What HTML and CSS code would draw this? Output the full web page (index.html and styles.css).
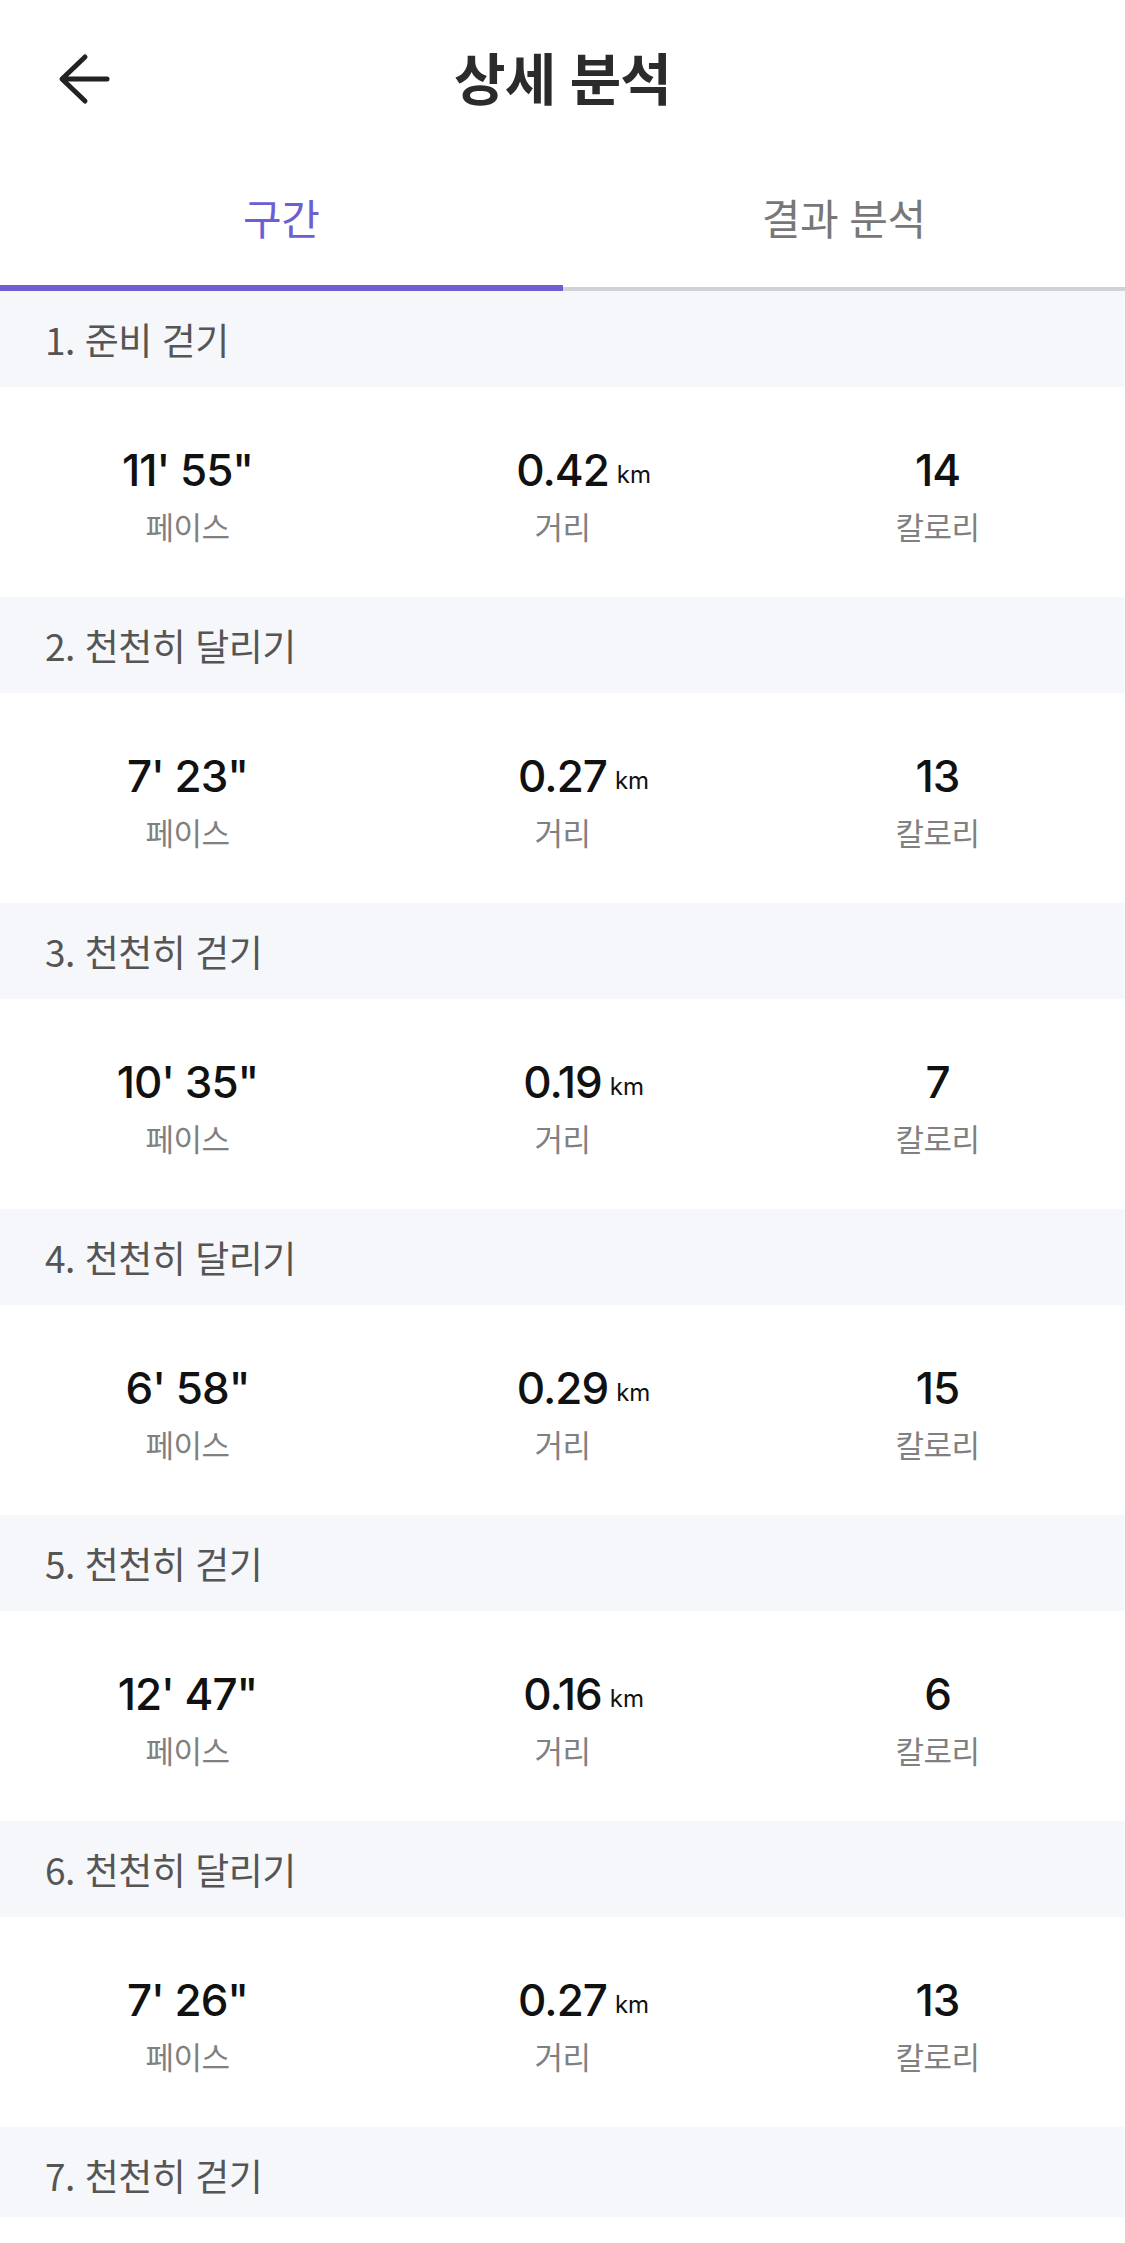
FILE: index.html
```html
<!DOCTYPE html>
<html lang="ko">
<head>
<meta charset="utf-8">
<title>상세 분석</title>
<link rel="stylesheet" href="styles.css">
</head>
<body>
<div class="screen">
  <header class="topbar">
    <button class="back" aria-label="뒤로">
      <svg width="56" height="56" viewBox="0 0 56 56" fill="none" stroke="#222" stroke-width="5" stroke-linecap="round" stroke-linejoin="round">
        <path d="M51 28H7"/>
        <path d="M29 6L6 28L29 50"/>
      </svg>
    </button>
    <h1 class="title">상세 분석</h1>
  </header>
  <nav class="tabs">
    <div class="tab active">구간</div>
    <div class="tab">결과 분석</div>
  </nav>

  <section class="seg">
    <div class="seg-head">1. 준비 걷기</div>
    <div class="stats">
      <div class="stat"><div class="val">11' 55"</div><div class="lbl">페이스</div></div>
      <div class="stat"><div class="val">0.42<span class="unit">km</span></div><div class="lbl">거리</div></div>
      <div class="stat"><div class="val">14</div><div class="lbl">칼로리</div></div>
    </div>
  </section>

  <section class="seg">
    <div class="seg-head">2. 천천히 달리기</div>
    <div class="stats">
      <div class="stat"><div class="val">7' 23"</div><div class="lbl">페이스</div></div>
      <div class="stat"><div class="val">0.27<span class="unit">km</span></div><div class="lbl">거리</div></div>
      <div class="stat"><div class="val">13</div><div class="lbl">칼로리</div></div>
    </div>
  </section>

  <section class="seg">
    <div class="seg-head">3. 천천히 걷기</div>
    <div class="stats">
      <div class="stat"><div class="val">10' 35"</div><div class="lbl">페이스</div></div>
      <div class="stat"><div class="val">0.19<span class="unit">km</span></div><div class="lbl">거리</div></div>
      <div class="stat"><div class="val">7</div><div class="lbl">칼로리</div></div>
    </div>
  </section>

  <section class="seg">
    <div class="seg-head">4. 천천히 달리기</div>
    <div class="stats">
      <div class="stat"><div class="val">6' 58"</div><div class="lbl">페이스</div></div>
      <div class="stat"><div class="val">0.29<span class="unit">km</span></div><div class="lbl">거리</div></div>
      <div class="stat"><div class="val">15</div><div class="lbl">칼로리</div></div>
    </div>
  </section>

  <section class="seg">
    <div class="seg-head">5. 천천히 걷기</div>
    <div class="stats">
      <div class="stat"><div class="val">12' 47"</div><div class="lbl">페이스</div></div>
      <div class="stat"><div class="val">0.16<span class="unit">km</span></div><div class="lbl">거리</div></div>
      <div class="stat"><div class="val">6</div><div class="lbl">칼로리</div></div>
    </div>
  </section>

  <section class="seg">
    <div class="seg-head">6. 천천히 달리기</div>
    <div class="stats">
      <div class="stat"><div class="val">7' 26"</div><div class="lbl">페이스</div></div>
      <div class="stat"><div class="val">0.27<span class="unit">km</span></div><div class="lbl">거리</div></div>
      <div class="stat"><div class="val">13</div><div class="lbl">칼로리</div></div>
    </div>
  </section>

  <section class="seg">
    <div class="seg-head">7. 천천히 걷기</div>
  </section>
</div>
</body>
</html>
```

FILE: styles.css
```css
* { box-sizing: border-box; }
html, body { margin: 0; padding: 0; background: #fff; }
body {
  font-family: "Noto Sans CJK KR", "Noto Sans", sans-serif;
  color: #222;
}
.screen {
  width: 1125px;
  height: 2217px;
  overflow: hidden;
  display: flex;
  flex-direction: column;
}
.topbar {
  height: 152px;
  display: flex;
  align-items: center;
  justify-content: center;
  position: relative;
  flex: none;
}
.back {
  position: absolute;
  left: 56px;
  top: 51px;
  width: 56px;
  height: 56px;
  padding: 0;
  border: 0;
  background: none;
  display: flex;
}
.title {
  margin: 0;
  font-size: 56px;
  font-weight: 700;
  color: #2b2b2b;
  line-height: 64px;
  letter-spacing: -1px;
}
.tabs {
  display: flex;
  height: 139px;
  flex: none;
}
.tab {
  flex: 1;
  text-align: center;
  padding-top: 38px;
  font-size: 42px;
  line-height: 54px;
  color: #777;
  border-bottom: 4px solid #d1d1d6;
  letter-spacing: -0.5px;
}
.tab.active {
  color: #6c5fd3;
  border-bottom: 6px solid #6c5fd3;
}
.seg { flex: none; }
.seg-head {
  height: 96px;
  background: #f6f7fb;
  display: flex;
  align-items: center;
  padding-left: 45px;
  font-size: 37px;
  color: #555;
  letter-spacing: -0.5px;
}
.stats {
  height: 210px;
  display: grid;
  grid-template-columns: repeat(3, 1fr);
  padding-top: 58px;
}
.stat {
  display: flex;
  flex-direction: column;
  align-items: center;
  gap: 12px;
}
.val {
  position: relative;
  font-family: Inter, "Liberation Sans", sans-serif;
  font-size: 44px;
  font-weight: 500;
  line-height: 50px;
  color: #111;
  white-space: nowrap;
  letter-spacing: -1px;
}
.unit {
  position: absolute;
  left: 100%;
  bottom: 0;
  margin-left: 8px;
  font-size: 24px;
  font-weight: 400;
  line-height: 40px;
  letter-spacing: 0;
}
.lbl {
  font-size: 31px;
  line-height: 38px;
  color: #808080;
  letter-spacing: -0.5px;
}
```
